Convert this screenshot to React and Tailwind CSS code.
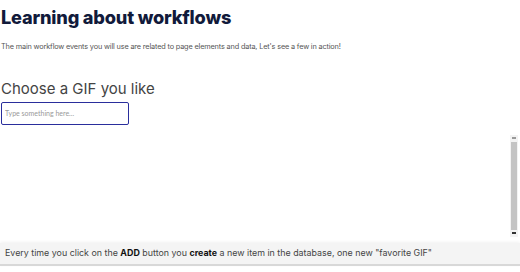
export default function App() {
  return (
    <div
      className="w-[520px] h-[272px] bg-white flex flex-col overflow-hidden"
      style={{ fontFamily: "Inter, 'Noto Sans', sans-serif" }}
    >
      {/* Encabezado */}
      <div className="pl-[1px] pt-[5px]">
        <h1 className="text-[18.2px] leading-[24px] font-extrabold tracking-[-0.2px] text-[#111a3b]">
          Learning about workflows
        </h1>
        <p className="mt-[13px] text-[7.3px] leading-[10px] tracking-[-0.15px] text-[#555]">
          The main workflow events you will use are related to page elements and data, Let's see a few in action!
        </p>
      </div>

      {/* Selector de GIF */}
      <div className="pl-[1px] mt-[28px]">
        <h2 className="text-[15px] leading-[18px] text-[#444]">Choose a GIF you like</h2>
        <input
          placeholder="Type something here..."
          className="mt-[1px] w-[128px] h-[23px] px-[3px] border-[1.5px] border-[#2a2e9c] rounded-[2px] text-[7px] placeholder:text-[#999] outline-none"
          style={{ fontFamily: "Lato, sans-serif" }}
        />
      </div>

      {/* Zona con barra de desplazamiento */}
      <div className="flex justify-end mt-[10px] pr-[2px]">
        <div className="w-[8px] h-[102px] flex flex-col items-center bg-[#f3f3f3]">
          <div className="h-[7px] flex items-center justify-center">
            <div className="w-[4px] h-[2px] bg-[#999]" />
          </div>
          <div className="w-[6px] flex-1 bg-[#c4c4c4]" />
          <div className="h-[7px] flex items-center justify-center">
            <div className="w-[4px] h-[2px] bg-[#333]" />
          </div>
        </div>
      </div>

      {/* Barra inferior */}
      <div className="mt-[6px] h-[23px] flex items-center pl-[5px] bg-[#f4f4f4] border-b-[2px] border-[#d8d8d8] shadow-[0_-1px_3px_rgba(0,0,0,0.06)]">
        <p className="text-[8.9px] text-[#444]">
          Every time you click on the <b className="text-[#111]">ADD</b> button you{" "}
          <b className="text-[#111]">create</b> a new item in the database, one new "favorite GIF"
        </p>
      </div>
    </div>
  );
}
